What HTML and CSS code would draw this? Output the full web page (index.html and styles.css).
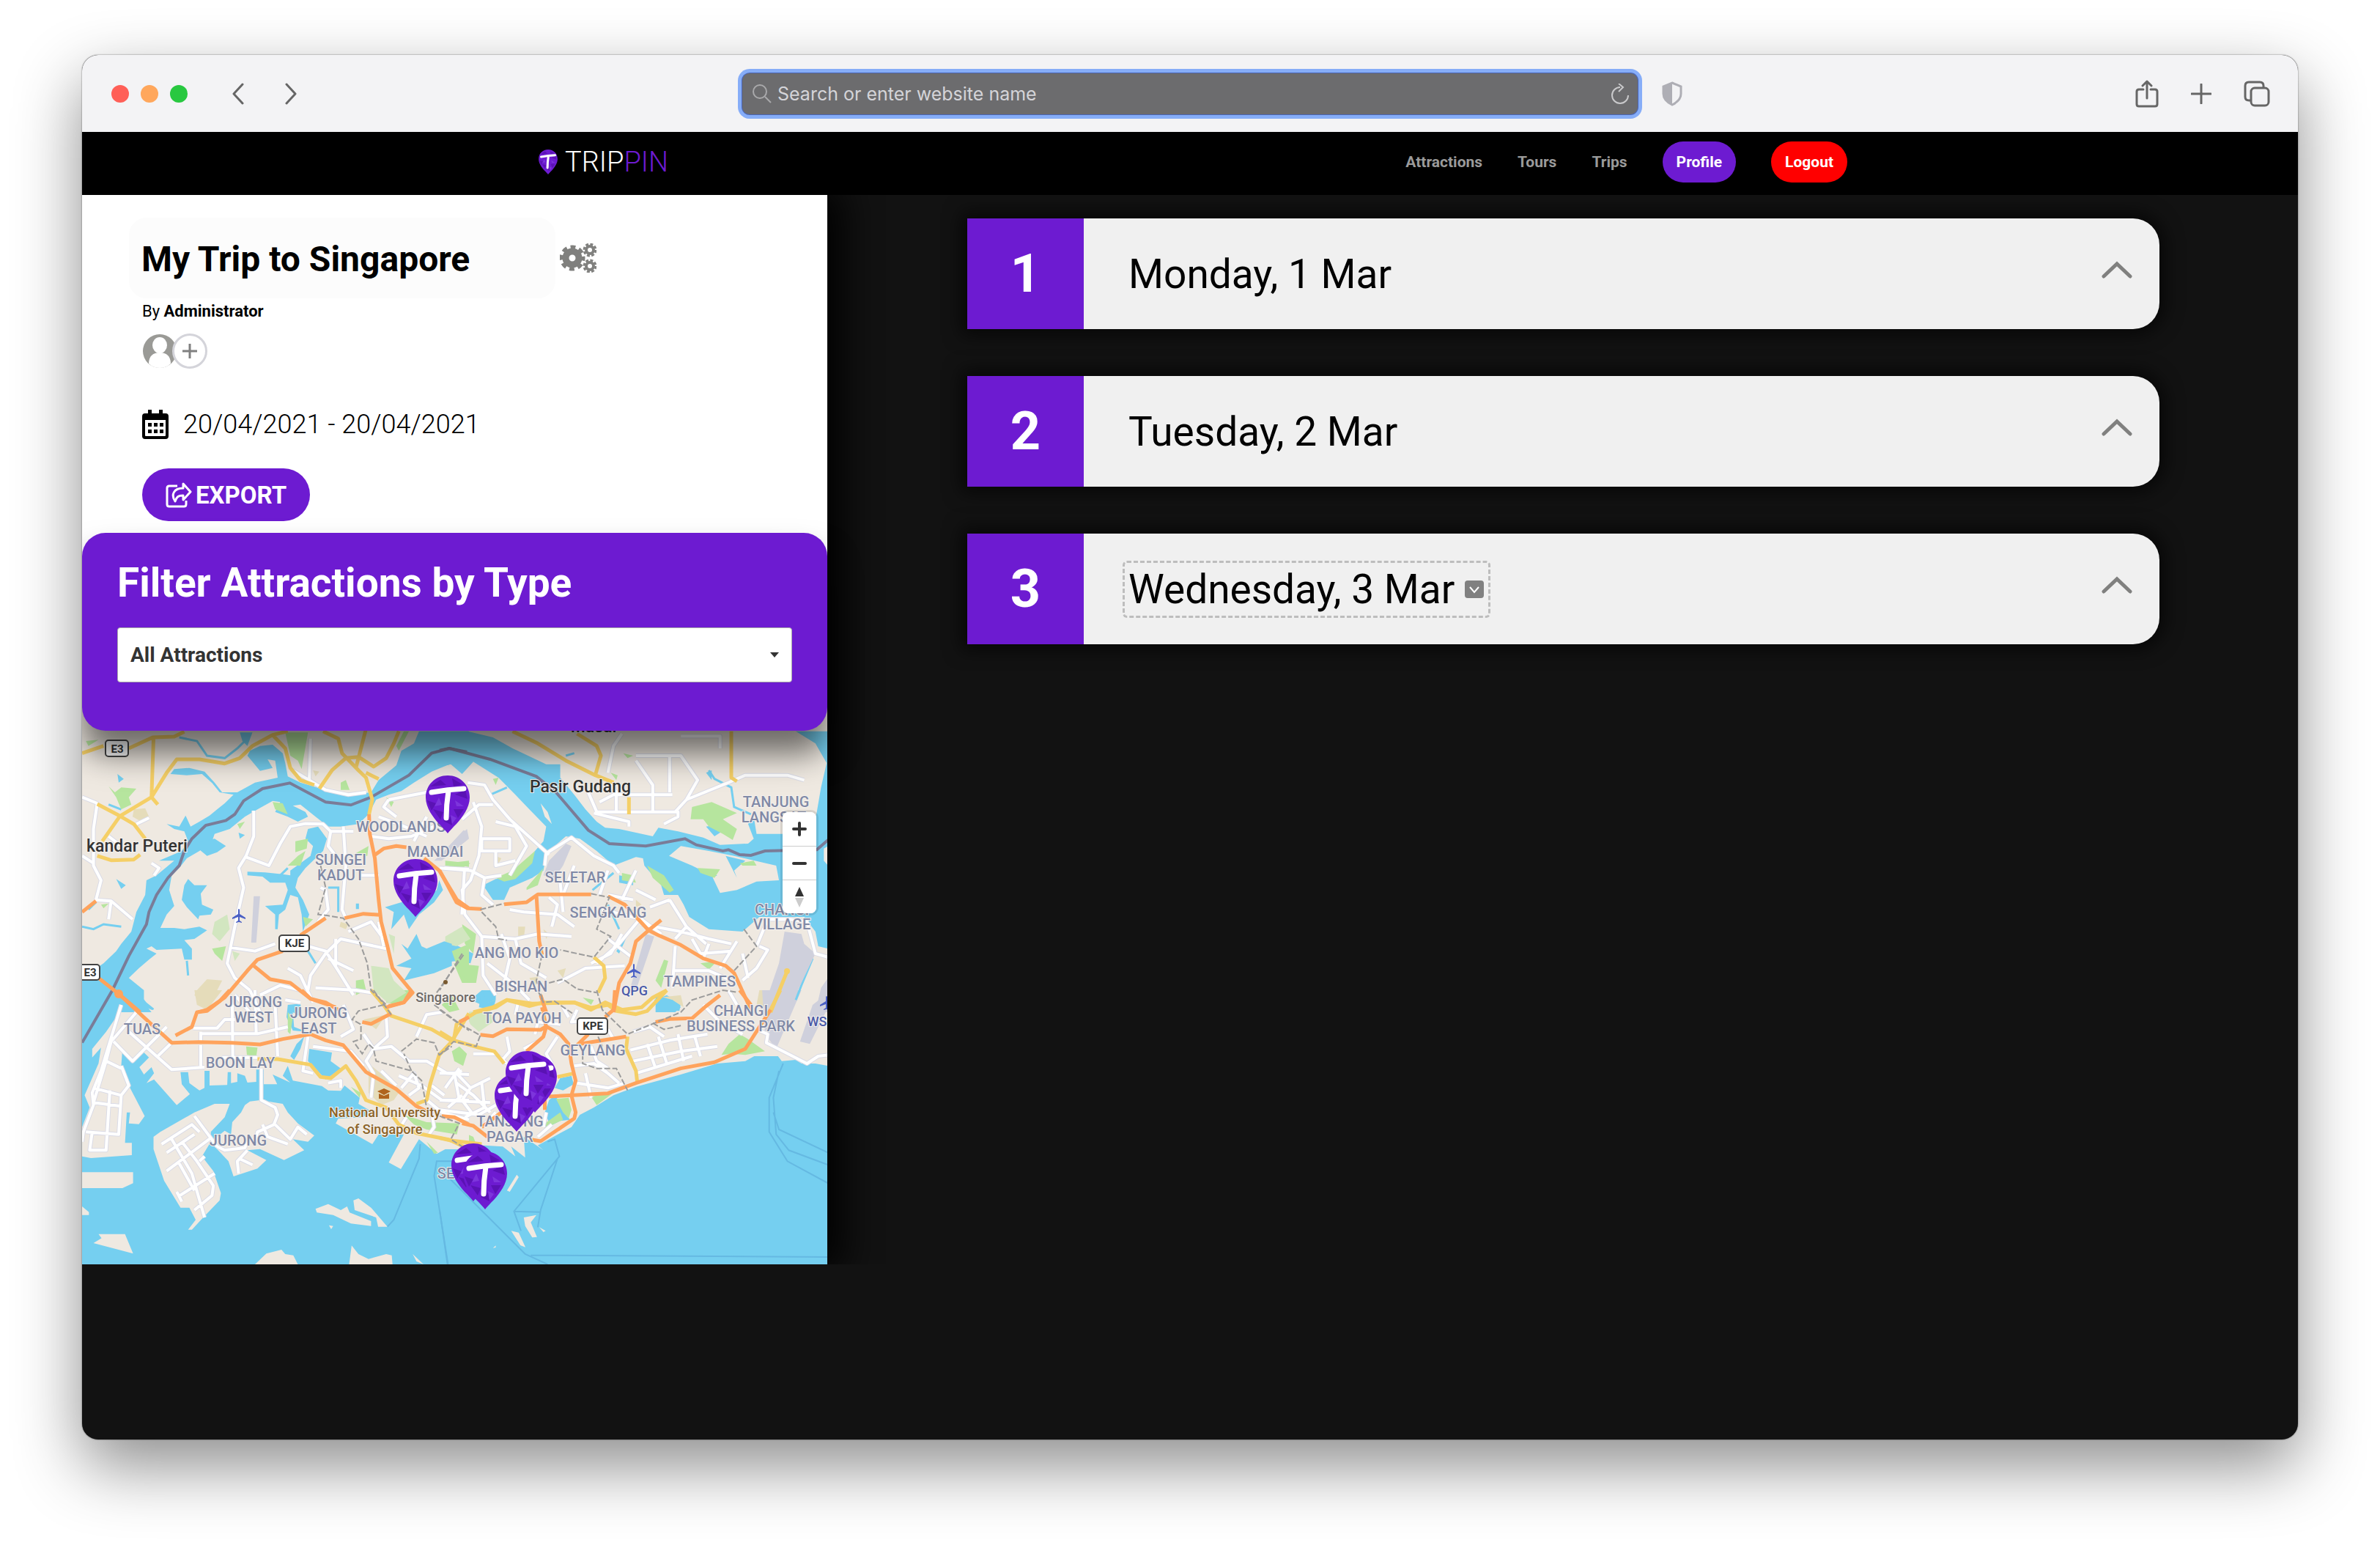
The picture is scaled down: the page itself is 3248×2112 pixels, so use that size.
FILE: index.html
```html
<!DOCTYPE html>
<html lang="en">
<head>
<meta charset="utf-8">
<title>TRIPPIN - My Trip to Singapore</title>
<link rel="stylesheet" href="styles.css">
</head>
<body>
<svg class="defs" aria-hidden="true">
  <symbol id="pin" viewBox="0 0 60 79">
    <path d="M30 0C13 0 0 13 0 30c0 14 10 27 18 36 5 5 9 9 12 13 3-4 7-8 12-13 8-9 18-22 18-36C60 13 47 0 30 0z" fill="#6d1bd1"/>
    <path d="M6 15l14-9 8 7zM36 4l14 8-12 3zM2 34l12 4-6 10zM40 26l14-6 3 12zM10 46l14 4-4 10zM38 46l14 0-8 12zM24 62l10-6 2 12z" fill="#5a12b4"/>
    <path d="M22 40l-10 2 6-12zM40 34l12 8-10 0zM34 54l8 4-6 8z" fill="#7d35dc"/>
    <path d="M8 23Q30 19 52 18M31 21Q28 40 28 58" fill="none" stroke="#fff" stroke-width="7" stroke-linecap="round"/>
  </symbol>
  <symbol id="chevron-up" viewBox="0 0 42 24"><path d="M3 21L21 4l18 17" fill="none" stroke="#80807f" stroke-width="5" stroke-linecap="round"/></symbol>
  <symbol id="plane" viewBox="0 0 20 20"><path d="M9 1q1-2 2 0v6l8 5v2l-8-3v5l3 2v1l-4-1-4 1v-1l3-2v-5l-8 3v-2l8-5z" fill="#4a5fc4"/></symbol>
</svg>
<div class="window">
  <div class="chrome">
    <div class="chrome-left">
      <div class="lights"><span class="light red"></span><span class="light amber"></span><span class="light green"></span></div>
      <button class="icon-button" aria-label="Back"><svg width="18" height="30" viewBox="0 0 18 30"><path d="M15 2L3 15l12 13" class="line"/></svg></button>
      <button class="icon-button forward" aria-label="Forward"><svg width="18" height="30" viewBox="0 0 18 30"><path d="M3 2l12 13L3 28" class="line"/></svg></button>
    </div>
    <div class="address">
      <svg width="26" height="26" viewBox="0 0 26 26"><circle cx="10" cy="10" r="9" class="address-line"/><path d="M17 17l8 8" class="address-line"/></svg>
      <input class="address-input" type="text" aria-label="Address" placeholder="Search or enter website name">
      <button class="icon-button" aria-label="Reload"><svg width="24" height="28" viewBox="0 0 24 28"><path d="M12 5a11 11 0 1 0 11 11M10 0l6 5-6 6" class="reload-line"/></svg></button>
    </div>
    <div class="chrome-right">
      <button class="icon-button" aria-label="Privacy report"><svg width="28" height="34" viewBox="0 0 28 34"><path d="M14 2l12 5v10c0 8-6 12-12 15C8 29 2 25 2 17V7z" fill="none" stroke="#aeaeb5" stroke-width="3"/><path d="M14 2v30C8 29 2 25 2 17V7z" fill="#aeaeb5"/></svg></button>
      <div class="actions">
        <button class="icon-button" aria-label="Share"><svg width="32" height="38" viewBox="0 0 32 38"><path d="M11 13H5q-3 0-3 3v17q0 3 3 3h22q3 0 3-3V16q0-3-3-3h-6M16 25V2M10 8l6-6 6 6" class="line"/></svg></button>
        <button class="icon-button" aria-label="New tab"><svg width="28" height="28" viewBox="0 0 28 28"><path d="M14 1v26M1 14h26" class="line"/></svg></button>
        <button class="icon-button" aria-label="Tab overview"><svg width="36" height="36" viewBox="0 0 36 36"><rect x="10" y="10" width="24" height="24" rx="5" class="line"/><path d="M9 27H7q-5 0-5-5V7q0-5 5-5h15q5 0 5 5v2" class="line"/></svg></button>
      </div>
    </div>
  </div>

  <header class="site-header">
    <div class="site-header-inner">
      <a class="brand" href="#"><svg width="26" height="34"><use href="#pin"/></svg><span class="brand-name">TRIP<span class="brand-accent">PIN</span></span></a>
      <nav class="nav">
        <a class="nav-link" href="#">Attractions</a>
        <a class="nav-link" href="#">Tours</a>
        <a class="nav-link" href="#">Trips</a>
        <a class="pill" href="#">Profile</a>
        <a class="pill logout" href="#">Logout</a>
      </nav>
    </div>
  </header>

  <div class="page">
    <aside class="sidebar">
      <section class="trip">
        <div class="title-row">
          <h1 class="trip-title">My Trip to Singapore</h1>
          <button class="icon-button" aria-label="Trip settings"><svg width="50" height="40" viewBox="0 0 50 40" fill="none" stroke="#80807e"><circle cx="17" cy="20" r="9" stroke-width="9"/><circle cx="17" cy="20" r="15" stroke-width="5" stroke-dasharray="6.8 5" stroke-dashoffset="3"/><circle cx="41" cy="9" r="5" stroke-width="4"/><circle cx="41" cy="9" r="8" stroke-width="3" stroke-dasharray="4 2.3"/><circle cx="41" cy="31" r="5" stroke-width="4"/><circle cx="41" cy="31" r="8" stroke-width="3" stroke-dasharray="4 2.3"/></svg></button>
        </div>
        <p class="byline">By <strong>Administrator</strong></p>
        <div class="members">
          <svg width="48" height="48" viewBox="0 0 48 48"><circle cx="24" cy="24" r="23" fill="#9a9a96"/><ellipse cx="24" cy="16" rx="10" ry="11" fill="#fff"/><path d="M9 41c0-10 6-15 15-15s15 5 15 15q-6 6-15 6T9 41z" fill="#fff"/></svg>
          <button class="add-member" aria-label="Add member"><svg width="20" height="20" viewBox="0 0 20 20"><path d="M10 0v20M0 10h20" stroke="#808080" stroke-width="3"/></svg></button>
        </div>
        <p class="dates"><svg width="36" height="40" viewBox="0 0 36 40"><path d="M8 0h5v5h10V0h5v5h4q4 0 4 4v27q0 4-4 4H4q-4 0-4-4V9q0-4 4-4h4zM4 14v21q0 1 1 1h26q1 0 1-1V14z" fill-rule="evenodd"/><path d="M8 18h5v5H8zM16 18h5v5h-5zM24 18h5v5h-5zM8 27h5v5H8zM16 27h5v5h-5zM24 27h5v5h-5z"/></svg><span>20/04/2021 - 20/04/2021</span></p>
        <button class="export"><svg width="36" height="36" viewBox="0 0 36 36" fill="none" stroke="#fff" stroke-width="3"><path d="M16 6H5q-3 0-3 3v22q0 3 3 3h20q3 0 3-3v-5"/><path d="M24 3l10 11-10 11v-6c-7 0-9 2-11 8-6-9-2-18 11-18z" stroke-linejoin="round"/></svg><span>EXPORT</span></button>
      </section>

      <section class="filter">
        <label class="filter-title" for="type">Filter Attractions by Type</label>
        <div class="select-box">
          <select id="type" class="select"><option>All Attractions</option></select>
          <svg class="select-arrow" width="12" height="7" viewBox="0 0 12 7"><path d="M0 0h12L6 7z" fill="#333"/></svg>
        </div>
      </section>

      <section class="map">
        <svg class="map-canvas" viewBox="112 956 1017 768" role="img" aria-label="Map of Singapore">
          <rect x="112" y="956" width="1017" height="768" fill="#efe9e1"/>
          <!-- south: open sea with the mainland over it -->
          <path d="M112 1350H240V1724H1129V1500H112z" fill="#75cff0"/>
          <rect x="112" y="1440" width="1017" height="284" fill="#75cff0"/>
          <g transform="translate(600 1350) scale(.3827 .3333)">
            <path class="land" d="M0 0H1385V310L1340 300H1290L1270 285L1220 290L1200 260L1130 265L1090 290L990 300L860 345L700 395L620 430L550 480L500 510L470 560L350 635L370 655L320 615L300 600L305 685L255 640L270 680L225 640L160 635L60 650H0z"/>
            <path class="land" d="M255 985L282 992L306 1052L288 1044zM300 930L345 920L325 950L347 1010L330 1012L305 965zM355 970L378 985L370 990zM240 820L275 755L282 765L250 825zM190 1055l10-10v8z"/>
            <path class="water" d="M400 440L418 440L440 490L465 530L430 535L395 555L375 500L390 450zM430 360L470 350L478 385L440 410L410 400zM765 40L810 20L860 55L855 85L790 80zM110 40L150 0L200 0L200 40L150 60z"/>
            <path class="park" d="M1070 180L1100 200L1160 250L1090 265L1040 260L1005 265L1030 220zM415 445L460 440L470 490L460 525L440 500zM540 435L620 420L560 470zM10 20L60 30L70 90L20 70zM50 225L80 240L60 280L75 325L50 320L20 285L45 270zM0 535L60 550L65 580L0 570zM60 570L120 600L130 630L60 625zM370 550L430 500L440 530L375 565z"/>
            <path class="park soft" d="M90 90L180 80L190 130L140 170L110 140z"/>
            <path class="field" d="M780 30L860 20L870 70L830 40zM1140 0L1210 0L1170 80L1130 60z"/>
            <path class="runway" d="M1150 0H1290L1200 240L1160 180zM1330 60L1385 10L1385 70L1320 220L1285 210z"/>
          </g>
          <g transform="translate(100 1350) scale(.3444 .3333)">
            <path class="land" d="M250 0L290 50L320 75L300 110L380 95L370 85L310 80L200 30L170 110L130 170L75 240V275L110 235L100 300L45 430L65 480L35 560V680L70 687L232 675V625H205L212 500H225L220 545L260 548L283 515L240 430L220 390V370L190 310L195 240L240 295L280 255L300 275L262 315L280 345L310 315L320 340L290 380L320 365L410 470L462 425L430 385L425 335H455L460 380L500 410L520 400V330H540V390L610 388L612 335H625V380L650 375V340L680 350L690 378L725 375V325H755V385H808L790 345L860 378L830 350L850 310L870 370L985 392L1010 410L1060 412L1075 390L1135 440L1130 465L1180 495L1150 520L1050 525L1040 545L1185 630L1210 590H1310L1250 705L1298 732L1370 610L1440 670L1475 650H1568V-60H250z"/>
            <path class="land" d="M620 465H560L480 500L345 580L318 600V650L360 780L425 890H460L485 940L455 980H470L515 930L580 860L585 830L555 740L510 680L545 620V580L600 520zM700 455L740 450L830 465L850 500L890 545L955 595L930 620L870 610L915 655L835 695L740 650L690 655L765 695L730 730L635 762L615 700L560 640L545 620L600 575L625 590L630 540L665 500L680 470zM35 745H237V790L195 810H35zM100 998H205L237 1078L80 1035L112 1015zM35 885L62 908V920H35zM960 895L1010 875L1060 900L1085 885L1095 910L1180 945V965L1100 955L1030 920L965 910zM1110 860L1130 852L1180 890L1245 968H1208L1200 930L1115 900zM720 1122L765 1078L825 1062L840 1080L872 1085L890 1122zM1093 1122L1103 1045L1130 1080L1170 1100L1240 1080L1262 1085L1265 1122zM1345 1080L1388 1122L1360 1110zM1013 962L1030 965L1022 978z"/>
            <path class="water" d="M915 190L900 240L875 285L860 270L885 220zM935 240L1025 255L1020 290L1060 320L1000 365L950 310L930 290zM850 60L900 55L905 110L870 90L875 150L925 170L870 165L845 110z"/>
            <path class="park" d="M685 230L730 235L725 272L688 265zM850 90L870 110L860 180L850 170zM1240 0H1340L1290 60L1240 50zM1310 510L1400 540L1530 545L1520 590L1400 570L1350 550zM1500 250L1530 230L1560 260L1545 310L1510 290zM1400 620L1420 640L1445 665L1430 670zM1100 395L1140 420L1135 440zM1460 60L1500 20L1530 80L1490 90z"/>
            <path class="field" d="M480 0H590L530 80L490 60zM1170 300L1230 350L1290 420L1270 450L1220 470L1170 420zM1150 120L1240 100L1200 160z"/>
          </g>
          <g transform="translate(600 980) scale(.3827 .3333)">
            <path class="water" d="M0 50H100L190 75L260 120L380 185L430 185V240L480 310L520 370L560 420L590 445L640 450L760 480L780 445L850 460L940 485L1000 515L1100 510L1120 490L1100 430L1120 400L1130 470L1220 470L1330 460L1345 380L1360 280L1380 180L1340 100L1270 50H1385V940L1350 930L1340 870L1300 810L1140 810L1080 870L960 860L890 810L870 760L850 720H800L790 680L730 600L725 570L700 565L620 600L560 540L500 490L450 480L380 550L370 620L330 650L250 690L230 740L190 740L155 680L200 655L250 650L300 600L340 540L370 500L380 440L320 370L270 310L210 240L120 175L80 225L40 185L0 195z"/>
            <path class="land" d="M860 520L960 540L1050 560L1200 600L1210 660L1130 665L1060 700L1000 712L970 640L900 600L818 560zM360 345L385 380L400 430L375 400zM1370 530L1385 520V600L1370 580zM430 530L480 500L560 560L590 610L530 600L480 580z"/>
            <path class="water" d="M640 640L690 650L690 680L640 670zM0 940L50 920L120 960L110 1000L60 990L0 1000zM770 1130L830 1150L860 1180L840 1200H770zM630 950L680 860L640 960zM150 1110L170 1160L200 1150L190 1190L140 1180zM950 440L1000 430L1020 450L980 480zM950 220L970 250L970 210zM1060 650L1020 560L1090 580L1050 620zM930 625L990 640L970 650z"/>
            <path class="waterway" d="M960 210L980 245L1040 280L1050 360L1110 390M450 150L480 140M545 700L620 630M600 760L640 860M1330 980L1290 1090L1270 1150M180 310L240 280"/>
            <path class="park" d="M900 360L970 340L1060 385L1010 410L1060 450L1045 495L1010 470L960 440L940 410L895 410zM740 600L800 640L835 700L820 710L760 650zM200 650L260 620L340 540L330 590L270 655L230 665zM310 690L370 610L350 680L310 700zM20 580L110 590L80 610L20 600zM770 1070L800 985L815 990L790 1100zM50 1000L140 1010L130 1080L80 1080zM80 840L130 880L120 960L90 920zM930 1000L990 990L960 1025zM1070 590L1120 580L1130 600H1080zM650 630L690 640L700 670L650 660zM610 220L635 230L630 250zM190 245L210 240L200 270zM510 1140L550 1150L540 1170zM920 610L1000 615L980 650L930 630zM655 140L690 150L670 160z"/>
            <path class="park soft" d="M20 890L80 850L110 900L60 930L20 920z"/>
            <path class="field" d="M280 850H305L300 900H280zM370 860L390 880L380 900zM320 1060L350 1055L340 1100zM420 1030L450 1020L440 1060zM200 560L220 570L210 590zM700 740L720 760L700 770z"/>
            <path class="runway" d="M450 510L470 520L440 600L410 650L370 640L390 580zM735 880L765 890L700 1110L680 1100zM1230 870L1290 880L1300 920L1340 960L1240 1200H1150L1210 1000zM1360 1100L1385 1060V1200H1340zM0 560L85 455L95 460L20 560z"/>
          </g>
          <g transform="translate(100 980) scale(.3444 .3333)">
            <path class="water" d="M1568 50H1370L1350 100L1300 130L1280 190L1210 250L1180 300L1100 310L1010 295L950 275L900 260L850 235L840 180L830 140L790 105L740 110L700 130L690 150L740 212L790 200L770 165L800 170L810 240L720 260L650 300H590L560 260L520 215L460 200L400 205L385 225L450 230L510 225L550 262L580 300L635 310L600 345L570 370L540 395L500 420L465 440L445 395L420 440L370 430L400 450L440 460L455 500L430 540L340 580L400 580L330 640L290 660L285 720L250 790L230 870L190 920L170 950L120 1000L35 1060V1200H310L280 1160V1110L220 1060L260 1020L300 985L330 960L290 940L310 930L330 945L430 940L440 985H470V940L440 905L480 900L530 865L500 850L440 860L400 855H345L370 800L400 765L380 700L390 640L420 610L450 570L500 540L550 500L560 470L620 450L680 400L730 370L790 335L820 340L800 380L850 400L890 420L930 400L920 380L870 355L900 350L960 400L1010 440H1060L1130 430L1170 390L1200 330L1250 310L1300 295L1350 260L1420 215L1480 190L1568 160z"/>
            <path class="water" d="M930 450L970 440L1005 490L990 540L950 580L920 610L890 650L880 690L910 740L935 800L910 870L905 800L890 730L860 720L840 780L815 800L810 860H800V800L760 765L830 760L850 700L840 670L780 670L750 645L690 640V625L760 628L830 635L860 640V620L900 590L940 560L950 520L920 490zM455 655L480 680L530 680L505 715L510 760L555 780L545 800L500 805L495 820L450 770L430 740L440 680zM500 505L560 490L605 520L570 545L530 560L495 530zM1235 770L1300 750L1400 735L1440 700L1450 660L1465 700L1430 750L1370 800L1330 860L1310 800L1260 860L1270 790zM1300 920L1325 940L1360 880L1380 930L1400 940L1470 910L1500 920V1010L1430 1040L1310 1070L1340 1020L1280 1010L1340 980zM660 55H710L690 110L670 90zM170 655L208 680L190 695zM175 225L200 245L180 260zM655 465L680 475L660 490zM1120 755H1132V778H1120z"/>
            <path class="waterway" d="M420 75L490 90L530 150L600 160L650 120L680 90M35 850L80 860L120 840L190 850M1010 690L1050 690L1050 790M450 990L455 1050M930 950L960 1000M810 650L850 610M740 300L750 350M140 350L190 370M60 780L90 750"/>
            <path class="park" d="M840 55H930L905 205L890 170L860 150zM1310 50H1330L1290 130L1280 110zM50 90L100 85L60 110zM140 275L165 300L190 280L250 285L220 320L230 350L190 370L170 320zM880 500L930 490L925 530L880 545zM790 340L830 345L850 390L800 370zM890 560L920 540L900 600L850 600zM910 810L950 820L920 850zM1120 1070L1150 1065L1160 1110L1120 1130zM650 430L680 420L660 450zM1060 260L1080 250L1095 290L1060 290zM1500 950L1568 920V1070L1530 1040zM110 760L140 755L120 775zM550 940L605 930L590 990L560 960zM1110 555L1170 520L1165 560zM1480 590L1568 580V605zM1240 320L1270 340L1260 360z"/>
            <path class="park soft" d="M560 830L610 800L620 860L580 910L550 880zM1180 1010L1250 1020L1270 1070L1320 1120L1250 1165L1190 1110zM1250 880L1275 890L1270 960zM630 950L660 960L640 990z"/>
            <path class="field" d="M240 370L285 365L300 400L270 420L235 400zM490 1110L530 1065L590 1070L560 1130L530 1180L480 1130zM1060 830L1090 840L1080 860L1055 850zM950 210L975 215L960 235z"/>
            <path class="runway" d="M715 725H740L725 915H705zM1560 450L1430 580L1460 580L1568 490z"/>
          </g>

          <!-- streets: the casing is the same geometry, drawn wider first -->
          <defs>
            <g id="streets">
              <g transform="translate(100 980) scale(.3444 .3333)">
                <path d="M35 320L95 345L80 450L80 600L110 660L90 740L150 745L235 820M150 745L140 820M715 375V480L685 560L655 610L675 690L640 850L610 1000L640 1060L700 1110M685 565L775 600L820 510L860 440L920 428L990 430L1020 460H1110M1070 440L1080 600L1065 780L1080 815M1020 460L1010 520L1040 560M930 1110L940 1050L1000 960L1060 900L1240 940M930 930L1000 950L1050 1030L1110 1130M1090 870L1180 830L1230 900M1130 640L1210 640M1180 480L1250 490L1340 480L1450 430M1210 400L1290 430L1400 480M1250 330L1230 360L1280 400M1250 330L1400 300M1400 400L1350 500M1470 610L1568 615M1550 620L1540 800M35 560L80 590M620 935L720 950L800 920M140 480L190 520M250 430L300 405M980 690L1000 700L1010 780L970 830M310 590L340 610L320 640M870 210L1000 290L1090 310L1160 300M940 80L935 250M1210 830L1230 930"/>
                <path d="M850 1020L900 1050L950 1160M960 1100L1120 1110L1180 1120M1010 980L1110 1030M1040 900L1040 1010M700 1110L740 1200M740 1130L820 1090L900 1110M640 1130L700 1200"/>
              </g>
              <g transform="translate(600 980) scale(.3827 .3333)">
                <path d="M100 260L160 270L190 330L250 410L390 555M80 410L140 350L190 350M120 340L150 440L140 560L110 660L80 700L90 800L150 890L155 1050L200 1130M0 610L110 620L160 650L220 640M160 650L150 720L190 760M150 490H250V540H150zM200 420L270 440L310 520L250 640M200 540V600L270 580M375 600L380 550L470 485L550 560L620 600L640 630M530 300L560 380H850V400L800 430M550 385L675 420V440M760 380V270L700 170M630 380V300L600 250M780 150L860 150L920 250L880 330L840 380M860 70H1000V120M880 330L1030 260L1090 230H1240L1300 250M570 340L620 310H830M650 60L620 110L600 220M700 150H820V300M250 780L300 790L420 800L480 850M150 890L270 900L350 880L470 890M390 730L420 760L400 850M430 670L440 790M480 600L440 720M600 620L570 720M700 620L650 740M580 780L720 820L790 880M720 840L860 870L960 900L1040 920M600 900L680 970M560 1000L640 920L720 810M820 740L880 850L950 920M880 850L840 900M900 900L930 960L1040 950M960 920L940 980M835 1030H960L1060 1080M840 930L830 1100M600 720L690 740M170 1000L260 1080L320 1150M220 880L250 980L230 1080M270 900L290 1000L380 1060M420 1080L520 1020L660 1010M1100 1060L1080 960M1060 910L1000 1020M1140 930L1170 945L1130 1020L1080 1070M1170 820L1130 930M1170 820H1250L1310 830L1340 960L1385 975M650 880L610 960L540 1000M700 700L770 740M750 770L820 740"/>
              </g>
              <g transform="translate(100 1350) scale(.3444 .3333)">
                <path d="M190 60L110 330L75 420L80 470L40 580L35 620M250 90L150 210L130 290L80 460M160 210L235 290L370 150M215 165L390 325L520 315M330 275L390 215M190 310L220 390L190 430L180 590L50 580M80 400L190 430M80 460L190 475M145 410L130 655H65L75 580M130 290L190 320M505 225V310M505 170V220M475 155H570L600 120H640M505 178H730L850 150M630 50L632 270M720 0L725 180M745 320L745 450L800 480L810 510L795 550L730 580L720 620M570 640L600 655L680 645L690 620M480 515L545 605L570 640M545 605L370 740M350 630L470 550L500 580M370 665L480 590M390 610L470 750L520 930M430 620L490 700L555 800L550 840L480 900M415 700L480 820M500 700L520 680M415 845L560 750M410 825L430 865M690 655L650 700L655 750M660 690L710 715M750 550L770 600L850 630M800 550L860 610L890 560L925 590M590 275H730M800 60L810 270M840 40L900 50M930 190L910 330L950 340M950 230L1100 250L1150 310M1070 60L1110 160L1060 190M1150 180L1190 240L1260 230L1330 290L1400 290L1480 340L1568 345M1190 240L1160 290L1190 340L1180 440M1010 380L1060 370L1060 400M1240 110L1245 190L1190 240M1360 190L1400 100L1460 90M1290 350L1380 390L1460 450M1300 400L1350 340L1370 400L1330 430M1420 500L1430 560L1410 590M1460 450H1568M1390 440L1460 500L1568 530M1530 450L1510 340L1540 330M1290 570L1320 520M1420 390L1470 430M1220 330L1280 390"/>
              </g>
              <g transform="translate(600 1350) scale(.3827 .3333)">
                <path d="M1130 160L1170 180L1165 215L1310 300L1350 270L1385 265M680 245L820 205L955 180M690 290L860 250L990 230M700 340L900 270M780 190L810 300M850 180L870 290M910 190L930 270M740 220L770 320M690 170L750 150L800 190M940 60L1000 130L1080 180M1030 0L1060 60M0 340L60 340L110 400L180 360M60 380L120 430L180 500M0 450L180 460M0 490L140 510L200 470M150 380L160 480L90 520M80 430L30 480M200 500L150 560M240 300L200 260L120 260M240 190L250 250L220 290M350 210L300 240M420 190L380 260L400 300M480 310L550 300L600 340M540 230L560 290L600 320M560 300L640 380M490 380L600 400L660 380M520 340L540 440M600 160L620 200M270 100L280 50M340 180L350 130L430 140M490 80L470 130L560 120M350 600L400 550M20 400L70 320M110 400L80 450L120 510M440 70L460 110M380 500L370 560"/>
              </g>
            </g>
          </defs>
          <use href="#streets" class="street-casing"/>
          <use href="#streets" class="street"/>

          <g class="border-line" transform="translate(100 980) scale(.3444 .3333)"><path d="M35 1325L155 1110L220 970L290 840L300 790L330 720L375 650L420 600L440 540L470 490L525 435L605 415L640 390L675 335L750 285L858 262L1000 340L1100 352L1180 320L1330 230L1420 140L1490 120L1560 135"/></g>
          <g class="border-line" transform="translate(600 980) scale(.3827 .3333)"><path d="M0 128L35 120L180 165L345 235L415 300L530 455L605 510L735 520L875 490L915 515L1010 540L1030 535L1070 555L1110 558L1160 540L1345 535L1385 495"/></g>
          <g class="highway yellow" transform="translate(100 980) scale(.3444 .3333)"><path d="M95 348L185 397L310 320L335 350M310 320L370 220L410 165L500 165L600 182L660 160L710 110L790 65L850 50M310 320L318 80M185 397L115 500M185 397L240 430L285 490M95 560L150 578L240 575L265 555M790 65L840 120L860 200L900 250L955 270M975 285L1025 210L1080 160L1130 155L1190 195L1240 160L1270 100L1290 50M990 50L1050 80L1065 140L1130 210L1160 240L1185 330L1172 390M1160 40L1120 200M1160 220L1210 245M35 140L120 110M220 120L315 75L400 72L440 52"/></g>
          <g class="highway yellow" transform="translate(600 980) scale(.3827 .3333)"><path d="M260 50L350 100L450 170L555 230L620 260M555 230L575 150L560 110L490 60M675 320V390M1040 50V240L1060 255M550 975L585 1010L590 1060L565 1120M120 1200L190 1180L240 1150L320 1175L370 1160H480L540 1190L590 1160L650 1190L720 1180L760 1140L810 1110M1240 1030L1180 1200"/></g>
          <g class="highway yellow" transform="translate(600 1350) scale(.3827 .3333)"><path d="M0 170L50 205L140 235L195 250L230 300M50 205L60 140L130 90L200 70L240 40L330 55L480 50L540 72L600 60L630 85L700 98L740 85L810 0M670 190L665 240L700 330L705 380M420 355L480 340M1215 0L1180 80M0 605L40 615L150 630"/></g>
          <g class="highway yellow" transform="translate(100 1350) scale(.3444 .3333)"><path d="M730 282H810L940 305L980 355L1020 360L1080 310L1120 370L1160 450L1240 480L1290 550L1360 585L1490 612L1568 650M1180 0L1230 60L1260 105L1420 160L1500 208L1568 95M1500 210L1450 265L1415 380L1400 450L1360 465"/></g>
          <g class="highway" transform="translate(100 980) scale(.3444 .3333)"><path d="M1172 390L1175 470L1195 570L1210 740L1220 830L1245 930L1265 1020L1345 1120L1310 1160L1240 1180M1190 560L1230 530L1280 520L1320 525M1390 570L1450 620L1520 740L1568 775M900 885L1000 815M1075 815L1150 797L1215 802M830 950L730 985L690 1030L600 1140L530 1190L495 1200M715 1010L780 1065L860 1080L940 1145L1040 1180M35 790L90 745M100 1060L180 1125L265 1200"/></g>
          <g class="highway" transform="translate(600 980) scale(.3827 .3333)"><path d="M0 620L60 750L100 775L150 778M230 758L310 750L350 718H540M345 720L355 910L365 965M600 725L660 760L745 865L790 823M745 865L780 885L860 925L940 980L1020 1010L1050 1040L1110 1190M745 865L700 910L680 1000L640 1080L620 1200M360 1130L380 1200"/></g>
          <g class="highway" transform="translate(100 1350) scale(.3444 .3333)"><path d="M180 15L310 140L390 215L500 212L630 215L740 222L830 200L940 180L1000 205L1070 225L1160 335L1280 405L1360 475L1400 495M620 0L580 45L530 85L490 90L470 150L405 185M905 0L940 35L1000 50L1050 80M1250 65L1310 50L1340 0M1145 130L1180 138L1260 95M1460 515L1510 520L1568 550M1530 130L1568 110"/></g>
          <g class="highway" transform="translate(600 1350) scale(.3827 .3333)"><path d="M145 182L190 188L240 160L360 162L380 148L430 180L460 220L470 300L485 370L470 430L485 500L480 525L360 618L330 612M365 70L380 150L370 190L310 250M490 225L530 180M500 220L665 190M770 130L820 118L900 115L950 65L1000 20M1070 0L1110 60M1180 80L1090 240L980 295L860 320L700 380L600 422L390 435M625 0L620 80L590 110M80 545L120 555L170 600M375 450V490M150 560L220 500"/></g>
          <circle cx="162" cy="1355" r="6" fill="#ffa35c"/><circle cx="1074" cy="1324" r="4" fill="#f5cf66"/>
          <g class="rail" transform="translate(600 1350) scale(.3827 .3333)"><path d="M0 80L60 130L145 185L130 230L50 210L0 265M560 0L580 80L670 180L860 90L900 40L1010 0L1060 8M350 0L370 50L410 45L480 100M565 190L580 230M510 260V300L560 320H630L670 410M760 135L800 160L860 145M0 515L70 545L40 610L80 640"/></g>
          <g class="rail" transform="translate(600 980) scale(.3827 .3333)"><path d="M145 780L230 755M150 790L200 850L210 900L240 905M540 715L605 730L560 860L610 890L550 975L430 945M365 965L345 1070L370 1160M390 1080L440 1065L490 1105L560 1120M1085 860L1130 930L1050 1030M80 960L0 1110"/></g>
          <g class="rail" transform="translate(100 1350) scale(.3444 .3333)"><path d="M1190 0L1260 100M1230 60L1130 85L1105 120L1140 140L1140 200L1110 210L1145 260L1170 220L1190 240L1200 290L1340 330L1380 370L1400 480M1430 60L1568 165M1300 250L1360 200L1430 215L1450 265L1500 230M1340 330L1310 260"/></g>
          <g class="rail" transform="translate(100 980) scale(.3444 .3333)"><path d="M980 600L1000 690L970 800L1010 805L1070 815L1130 900L1165 1000L1180 1110L1240 1170M1440 1120L1550 960"/></g>
          <g class="ferry" transform="translate(600 1350) scale(.3827 .3333)"><path d="M1225 300L1175 440V580L1240 700L1385 790M1210 330L1190 440L1200 590L1245 655L1385 715M1190 500L1210 570L1385 665M385 620L410 610L427 680L265 905L290 985M420 690L360 900L350 970M265 905L360 908M0 730L305 1080L385 1122M325 1085L1385 1092M0 900L28 1122"/></g>
          <g class="ferry" transform="translate(100 1350) scale(.3444 .3333)"><path d="M1375 630L1370 690L1270 940L1245 968M1485 1122L1430 760L1440 700H1500"/></g>

          <g class="district">
            <text x="547" y="1134">WOODLANDS</text><text x="594" y="1168">MANDAI</text>
            <text x="465" y="1179">SUNGEI</text><text x="465" y="1200">KADUT</text>
            <text x="346" y="1373">JURONG</text><text x="346" y="1394">WEST</text>
            <text x="435" y="1388">JURONG</text><text x="435" y="1409">EAST</text>
            <text x="194" y="1410">TUAS</text><text x="328" y="1456">BOON LAY</text><text x="325" y="1562">JURONG</text>
            <text x="641" y="1607">SENTOSA</text>
            <text x="1059" y="1100">TANJUNG</text><text x="1056" y="1121">LANGSAT</text>
            <text x="785" y="1203">SELETAR</text><text x="830" y="1251">SENGKANG</text>
            <text x="1067" y="1247">CHANGI</text><text x="1067" y="1267">VILLAGE</text>
            <text x="705" y="1306">ANG MO KIO</text><text x="711" y="1352">BISHAN</text>
            <text x="955" y="1345">TAMPINES</text><text x="1011" y="1385">CHANGI</text><text x="1011" y="1406">BUSINESS PARK</text>
            <text x="713" y="1395">TOA PAYOH</text><text x="809" y="1439">GEYLANG</text>
            <text x="696" y="1536">TANJONG</text><text x="696" y="1557">PAGAR</text>
          </g>
          <g class="town"><text x="187" y="1161">kandar Puteri</text><text x="792" y="1080">Pasir Gudang</text><text x="810" y="998">Masai</text></g>
          <g class="city"><text x="608" y="1366">Singapore</text></g><circle cx="608" cy="1339" r="3" fill="#7a5a30"/>
          <g class="campus"><text x="525" y="1523">National University</text><text x="525" y="1546">of Singapore</text></g>
          <path d="M524 1484l9 4-9 5-9-5zM517 1491l7 3 7-3v7h-14z" fill="#b0641e"/>
          <g class="airport"><text x="866" y="1357">QPG</text><text x="1115" y="1399">WS</text></g>
          <use href="#plane" x="316" y="1239" width="20" height="20"/><use href="#plane" x="855" y="1314" width="20" height="20"/><use href="#plane" x="1118" y="1358" width="20" height="20"/>
          <g class="shield">
            <rect x="144" y="1009" width="31" height="22" rx="4"/><text x="160" y="1026">E3</text>
            <rect x="107" y="1315" width="29" height="21" rx="4"/><text x="123" y="1331">E3</text>
            <rect x="381" y="1275" width="41" height="22" rx="4"/><text x="402" y="1291">KJE</text>
            <rect x="788" y="1388" width="41" height="22" rx="4"/><text x="809" y="1404">KPE</text>
          </g>
          <use href="#pin" x="581" y="1057" width="60" height="79"/>
          <use href="#pin" x="537" y="1171" width="60" height="79"/>
          <use href="#pin" x="700" y="1438" width="60" height="79"/>
          <use href="#pin" x="675" y="1464" width="60" height="79"/>
          <use href="#pin" x="690" y="1433" width="60" height="79"/>
          <use href="#pin" x="616" y="1559" width="60" height="79"/>
          <use href="#pin" x="632" y="1570" width="60" height="79"/>
        </svg>
        <div class="map-controls">
          <button class="map-button" aria-label="Zoom in"><svg width="20" height="20" viewBox="0 0 20 20"><path d="M10 2v16M2 10h16" stroke="#333" stroke-width="4" stroke-linecap="round"/></svg></button>
          <button class="map-button" aria-label="Zoom out"><svg width="20" height="20" viewBox="0 0 20 20"><path d="M2 10h16" stroke="#333" stroke-width="4" stroke-linecap="round"/></svg></button>
          <button class="map-button" aria-label="Reset bearing"><svg width="14" height="28" viewBox="0 0 14 28"><path d="M7 0l6 13H1z" fill="#333"/><path d="M1 15h12L7 28z" fill="#ccc"/></svg></button>
        </div>
      </section>
    </aside>

    <main class="days">
      <section class="day"><span class="day-number">1</span><h2 class="day-name">Monday, 1 Mar</h2><button class="icon-button toggle" aria-label="Collapse day 1"><svg width="42" height="24"><use href="#chevron-up"/></svg></button></section>
      <section class="day"><span class="day-number">2</span><h2 class="day-name">Tuesday, 2 Mar</h2><button class="icon-button toggle" aria-label="Collapse day 2"><svg width="42" height="24"><use href="#chevron-up"/></svg></button></section>
      <section class="day"><span class="day-number">3</span><h2 class="day-name selected">Wednesday, 3 Mar<svg class="badge" width="26" height="24" viewBox="0 0 26 24"><rect width="26" height="24" rx="4" fill="#808080"/><path d="M7 9l6 7 6-7" fill="none" stroke="#fff" stroke-width="2"/></svg></h2><button class="icon-button toggle" aria-label="Collapse day 3"><svg width="42" height="24"><use href="#chevron-up"/></svg></button></section>
    </main>
  </div>
</div>
</body>
</html>
```
FILE: styles.css
```css
* { box-sizing: border-box; }
body { margin: 0; padding: 75px 112px 148px; background: #fff; color: #000; font-family: Roboto, "Liberation Sans", sans-serif; }
h1, h2, p { margin: 0; }
a { text-decoration: none; }
button { font-family: inherit; cursor: pointer; }
svg { display: block; flex: none; }
.defs { position: absolute; width: 0; height: 0; }
.icon-button { display: flex; padding: 0; border: 0; background: none; }

.window { display: flex; flex-direction: column; min-height: calc(100vh - 223px); border-radius: 22px; background: #121212; overflow: clip; box-shadow: 0 0 2px rgba(0, 0, 0, .6), 0 36px 90px rgba(0, 0, 0, .45); }

.chrome { display: grid; grid-template-columns: 1fr minmax(0, 1222px) 1fr; align-items: center; height: 105px; background: #f3f3f5; }
.chrome-left { display: flex; align-items: center; padding-left: 40px; }
.lights { display: flex; gap: 16px; margin-right: 60px; }
.light { width: 24px; height: 24px; border-radius: 50%; }
.red { background: #ff5f57; }
.amber { background: #ffa75c; }
.green { background: #28c840; }
.forward { margin-left: 54px; }
.line { fill: none; stroke: #666; stroke-width: 3; stroke-linecap: round; stroke-linejoin: round; }
.address { display: flex; align-items: center; gap: 8px; height: 56px; padding: 0 12px 0 14px; border-radius: 10px; background: #6c6c6e; box-shadow: 0 0 0 1px #4a66b8, 0 0 0 6px #86adf8; }
.address-line { fill: none; stroke: #a9a9ab; stroke-width: 2; }
.reload-line { fill: none; stroke: #c9c9cb; stroke-width: 2; }
.address-input { flex: 1; min-width: 0; padding: 0; border: 0; outline: 0; background: none; font: 25px/32px Inter, "Liberation Sans", sans-serif; color: #fff; }
.address-input::placeholder { color: #d4d4d8; opacity: 1; }
.chrome-right { display: flex; align-items: center; justify-content: space-between; padding: 0 38px 0 33px; }
.actions { display: flex; align-items: center; gap: 44px; }

.site-header { background: #000; }
.site-header-inner { display: flex; align-items: center; justify-content: space-between; max-width: 1794px; height: 86px; margin: 0 auto; padding: 0 0 4px 8px; }
.brand { display: flex; align-items: center; gap: 10px; color: #fff; }
.brand-name { font-size: 38px; font-weight: 300; line-height: 48px; }
.brand-accent { color: #6d1bd1; }
.nav { display: flex; align-items: center; gap: 48px; }
.nav-link { color: #9a9a9a; font-size: 21px; font-weight: 700; line-height: 32px; }
.pill { padding: 12px 19px; border-radius: 28px; background: #6d1bd1; color: #fff; font-size: 21px; font-weight: 700; line-height: 32px; }
.logout { background: #f00; }

.page { display: grid; grid-template-columns: 1017fr 2007fr; align-items: start; flex: 1; }
.sidebar { background: #fff; box-shadow: 10px 0 50px 10px #000; clip-path: inset(0 -80px 0 0); }
.trip { padding: 31px 64px 16px; }
.title-row { display: flex; align-items: center; gap: 6px; }
.trip-title { width: 582px; padding: 27px 17px 23px; border-radius: 24px; background: #fcfcfc; font-size: 48px; font-weight: 700; line-height: 60px; }
.byline { margin: 2px 18px 0; font-size: 22px; line-height: 32px; }
.members { display: flex; margin: 14px 18px 0; }
.add-member { display: flex; align-items: center; justify-content: center; width: 48px; height: 48px; margin-left: -7px; padding: 0; border: 3px solid #d4d4da; border-radius: 50%; background: #fff; }
.dates { display: flex; align-items: center; gap: 20px; margin: 54px 18px 0; font-size: 36px; font-weight: 300; line-height: 44px; }
.export { display: flex; align-items: center; gap: 5px; height: 72px; margin: 38px 18px 0; padding: 0 32px; border: 0; border-radius: 36px; background: #6d1bd1; color: #fff; font-size: 33px; font-weight: 700; }

.filter { position: relative; z-index: 1; padding: 32px 48px 66px; border-radius: 32px; background: #6d1bd1; box-shadow: 0 32px 44px rgba(0, 0, 0, .55); }
.filter-title { display: block; margin-bottom: 25px; color: #fff; font-size: 55px; font-weight: 700; line-height: 72px; }
.select-box { position: relative; }
.select { display: block; width: 100%; height: 75px; padding: 0 17px; border: 1px solid #aaa; border-radius: 4px; appearance: none; background: #fff; color: #333; font: 700 28px/36px Roboto, "Liberation Sans", sans-serif; }
.select-arrow { position: absolute; right: 18px; top: 34px; }

.map { position: relative; margin-top: -40px; }
.map-canvas { width: 100%; height: auto; }
.map-controls { position: absolute; top: 151px; right: 15px; width: 46px; border-radius: 8px; background: #fff; box-shadow: 0 0 0 3px rgba(0, 0, 0, .1); overflow: hidden; }
.map-button { display: flex; align-items: center; justify-content: center; width: 46px; height: 46px; padding: 0; border: 0; background: #fff; }
.map-button + .map-button { border-top: 1px solid #ccc; }
.map path { vector-effect: non-scaling-stroke; }
.land { fill: #efe9e1; }
.water { fill: #75cff0; }
.waterway { fill: none; stroke: #75cff0; stroke-width: 3; }
.park { fill: #b6e59e; }
.park.soft { fill: #d2e6c0; }
.field { fill: #e5dcba; }
.runway { fill: #cfd0dc; }
.street-casing { fill: none; stroke: #dadbe6; stroke-width: 6; stroke-linejoin: round; }
.street { fill: none; stroke: #fff; stroke-width: 4; stroke-linejoin: round; }
.highway { fill: none; stroke: #ffa35c; stroke-width: 5; stroke-linejoin: round; }
.highway.yellow { stroke: #f5cf66; }
.border-line { fill: none; stroke: #7a7c98; stroke-width: 4; }
.rail { fill: none; stroke: #9c9c9c; stroke-width: 2; stroke-dasharray: 8 3; }
.ferry { fill: none; stroke: #65b9e2; stroke-width: 2; }
.district text, .town text, .city text, .campus text, .airport text { text-anchor: middle; paint-order: stroke; stroke: #f4f1ee; stroke-width: 2px; }
.district text { fill: #8089a6; font-size: 20px; font-weight: 500; }
.town text { fill: #333; font-size: 23px; font-weight: 500; }
.city text { fill: #6e6a66; font-size: 18px; font-weight: 500; }
.campus text { fill: #8c6428; font-size: 18px; font-weight: 500; }
.airport text { fill: #4a5aa8; font-size: 18px; font-weight: 500; }
.shield rect { fill: #fff; stroke: #444; stroke-width: 2px; }
.shield text { fill: #333; font-size: 15px; font-weight: 700; text-anchor: middle; }

.days { display: flex; flex-direction: column; gap: 64px; padding: 32px 189px 64px 191px; }
.day { display: flex; align-items: center; height: 151px; border-radius: 0 36px 36px 0; background: #f0f0f0; box-shadow: 0 0 24px 8px rgba(0, 0, 0, .6); }
.day-number { display: flex; align-items: center; justify-content: center; align-self: stretch; width: 159px; background: #6d1bd1; color: #fff; font-size: 72px; font-weight: 700; }
.day-name { display: flex; align-items: center; gap: 14px; height: 78px; margin-left: 53px; padding: 0 6px 0 5px; border: 3px solid transparent; border-radius: 6px; font-size: 55px; font-weight: 400; line-height: 72px; }
.selected { border: 3px dashed #bdbdbd; }
.toggle { margin: 0 37px 12px auto; }
```
